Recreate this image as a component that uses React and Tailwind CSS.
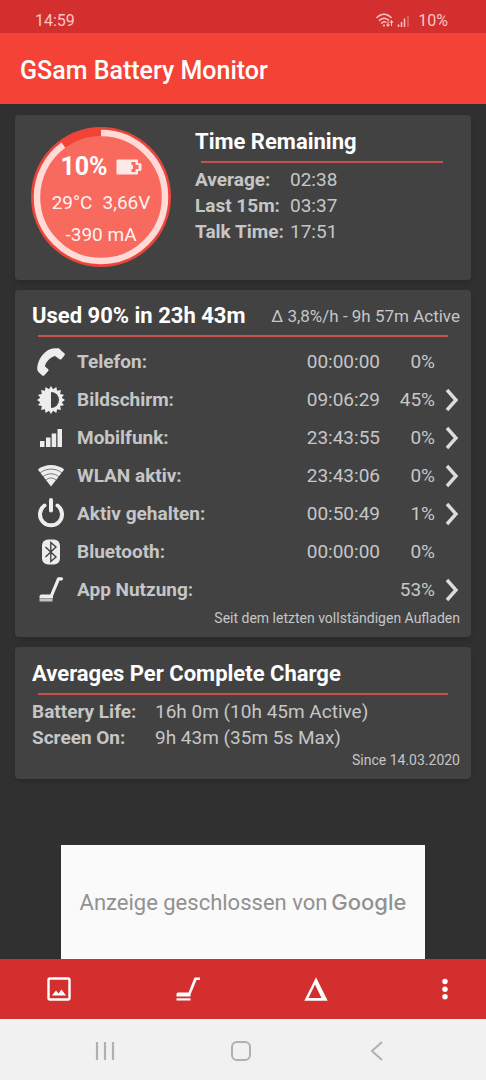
import React from 'react'

const PhoneIcon = () => (
  <svg viewBox="0 0 28 28" className="w-7 h-7 fill-[#ededed]">
    <path d="M13 1.200C16 0 19.500 0 21.500 .3C22.500 .5 23 1.200 23.800 2.200L27.300 5.300C28 6 28 6.600 27.400 7.400L24.800 10.800C24.200 11.600 23.400 11.700 22.600 11.200L18 8C13.500 9 8.500 14 8 18.500L11 21C11.700 21.600 11.800 22.200 11.200 23L7.400 27.200C6.700 28 6 28 5.200 27.400L1.500 23.900C.3 22.700 0 21 .3 19C1.300 11.500 6 4 13 1.200Z" />
  </svg>
)

const sunPoints = Array.from({ length: 32 }, (_, i) => {
  const radius = i % 2 === 0 ? 14 : 11
  const angle = (i * Math.PI) / 16 - Math.PI / 2
  return `${14 + radius * Math.cos(angle)},${14 + radius * Math.sin(angle)}`
}).join(' ')

const BrightnessIcon = () => (
  <svg viewBox="0 0 28 28" className="w-7 h-7">
    <polygon points={sunPoints} fill="#ededed" />
    <path d="M14 6A8 8 0 0 1 14 22Z" fill="#424242" />
  </svg>
)

const SignalIcon = () => (
  <svg viewBox="0 0 28 28" className="w-7 h-7 fill-[#ededed]">
    <rect x="3" y="17" width="4.500" height="6" />
    <rect x="9" y="13.500" width="4.500" height="9.500" />
    <rect x="14.700" y="9.500" width="4.500" height="13.500" />
    <rect x="20.500" y="5" width="4.500" height="18" />
  </svg>
)

const WifiIcon = () => (
  <svg viewBox="0 0 28 28" className="w-7 h-7">
    <path d="M14 24.500L.8 7.500C8 1.500 20 1.500 27.200 7.500Z" fill="#ededed" />
    <g fill="none" stroke="#6a6a6a" strokeWidth=".9">
      <path d="M3 11C9 5.800 19 5.800 25 11" />
      <path d="M6 14.800C10.500 10.800 17.500 10.800 22 14.800" />
      <path d="M8.500 18.300C12 15.200 16 15.200 19.500 18.300" />
    </g>
  </svg>
)

const PowerIcon = () => (
  <svg viewBox="0 0 28 28" className="w-7 h-7 overflow-visible" fill="none" stroke="#ededed" strokeWidth="4" strokeLinecap="round">
    <path d="M7.500 5.500A11 11 0 1 0 20.500 5.500" />
    <path d="M14 0V10.500" />
  </svg>
)

const BluetoothIcon = () => (
  <svg viewBox="0 0 28 28" className="w-7 h-7">
    <rect x="5" y="1.500" width="18" height="25" rx="6" fill="#ededed" />
    <path d="M8.500 9L19 19L13.800 23.500V4.500L19 9L8.500 19" fill="none" stroke="#424242" strokeWidth="1.400" />
  </svg>
)

const VacuumIcon = () => (
  <svg viewBox="0 0 28 28" className="w-7 h-7" fill="none">
    <path d="M24.500 2.800H21.500L14.500 19.500" stroke="#ededed" strokeWidth="3.200" strokeLinecap="round" strokeLinejoin="round" />
    <path d="M4.500 18.500H16V22.500H2.500V20.500Q2.500 18.500 4.500 18.500Z" fill="#ededed" />
    <path d="M2.500 23H15.500V25.500H2.500Z" fill="#c2c2c2" />
  </svg>
)

const ChevronIcon = () => (
  <svg viewBox="0 0 14 24" className="w-3.5 h-6" fill="none" stroke="#dcdcdc" strokeWidth="3.400">
    <path d="M2 2L11 12L2 22" />
  </svg>
)

const usage = [
  { label: 'Telefon:', time: '00:00:00', percent: '0%', Icon: PhoneIcon },
  { label: 'Bildschirm:', time: '09:06:29', percent: '45%', Icon: BrightnessIcon, more: true },
  { label: 'Mobilfunk:', time: '23:43:55', percent: '0%', Icon: SignalIcon, more: true },
  { label: 'WLAN aktiv:', time: '23:43:06', percent: '0%', Icon: WifiIcon, more: true },
  { label: 'Aktiv gehalten:', time: '00:50:49', percent: '1%', Icon: PowerIcon, more: true },
  { label: 'Bluetooth:', time: '00:00:00', percent: '0%', Icon: BluetoothIcon },
  { label: 'App Nutzung:', time: '', percent: '53%', Icon: VacuumIcon, more: true },
]

const Card = ({ children, className }) => (
  <section className={`rounded-sm bg-[#424242] shadow-md ${className}`}>{children}</section>
)

const StatusBar = () => (
  <div className="flex h-[33px] items-center justify-between bg-[#d32f2f] pt-2 pr-[38px] pl-[35px] text-base text-[#f9c6c3]">
    <span>14:59</span>
    <div className="flex items-center">
      <svg viewBox="0 0 34 16" className="mr-2 h-4 w-[34px]" fill="none" stroke="#f9c6c3" strokeWidth="1.500">
        <path d="M.5 5C5 0 11 0 15.500 5" />
        <path d="M3 7.800C6 4.300 10 4.300 13 7.500" />
        <path d="M5.200 10.500C7 8.300 9 8.300 10.300 9.500" />
        <circle cx="8" cy="12.500" r="1.100" fill="#f9c6c3" stroke="none" />
        <path d="M12 8.500V13M10.500 11.500L12 13.200L13.500 11.500M15.500 13V8M14 9.500L15.500 7.800L17 9.500" strokeWidth="1.100" />
        <path d="M22.500 11.500V14M25.500 9V14M28.500 5.500V14" />
        <path d="M32 3V14" strokeOpacity=".4" />
      </svg>
      <span>10%</span>
    </div>
  </div>
)

const BatteryGauge = () => (
  <div className="relative h-[140px] w-[140px] shrink-0">
    <svg viewBox="0 0 140 140" className="absolute inset-0 h-full w-full">
      <circle cx="70" cy="70" r="70" fill="#e2483d" />
      <circle cx="70" cy="70" r="68.500" fill="#f44336" />
      <circle cx="70" cy="70" r="61" fill="#f8695e" />
      {/* charge that is used up, clockwise from the top */}
      <circle cx="70" cy="70" r="64" fill="none" stroke="#ffdad7" strokeWidth="6.500" pathLength="100" strokeDasharray="90 10" transform="rotate(-90 70 70)" />
    </svg>
    <div className="relative flex flex-col items-center pt-6 text-[19px] text-[#fff3f2]">
      <div className="flex h-8 items-center gap-2 text-[25px] font-bold text-white">
        <span>10%</span>
        <svg viewBox="0 0 26 16" className="h-4 w-[26px]">
          <path d="M1.500 .5H21Q22 .5 22 1.500V4H24Q25.500 4 25.500 5.500V10.500Q25.500 12 24 12H22V14.500Q22 15.500 21 15.500H1.500Q.5 15.500 .5 14.500V1.500Q.5 .5 1.500 .5Z" fill="#ffe9e7" />
          <path d="M15.500 3H19.500V6H22.500V10H19.500V13H15.500V10H17V6H15.500Z" fill="#f8695e" />
        </svg>
      </div>
      <div className="mt-1 flex h-8 items-center gap-2.5">
        <span>29°C</span>
        <span>3,66V</span>
      </div>
      <div className="flex h-8 items-center">-390 mA</div>
    </div>
  </div>
)

export default function App() {
  return (
    <div className="flex min-h-screen flex-col bg-[#303030] font-[Roboto,sans-serif] text-[#c6c6c6]">
      <StatusBar />
      <header className="flex h-[71px] items-center bg-[#f44336] px-5 pt-1">
        <h1 className="text-[25px] font-medium text-white">GSam Battery Monitor</h1>
      </header>

      <main className="flex flex-1 flex-col gap-2.5 px-[15px] pt-[11px]">
        <Card className="flex gap-6 px-4 pt-3 pb-[13px]">
          <BatteryGauge />
          <div className="flex-1 pt-px">
            <h2 className="text-[22px] leading-7 font-bold text-white">Time Remaining</h2>
            <hr className="mt-[5px] mr-3 mb-1 ml-1.5 border-t-2 border-[#c4524d]" />
            <dl className="grid grid-cols-[95px_1fr] text-[19px] leading-[26px]">
              <dt className="font-bold">Average:</dt>
              <dd>02:38</dd>
              <dt className="font-bold">Last 15m:</dt>
              <dd>03:37</dd>
              <dt className="font-bold">Talk Time:</dt>
              <dd>17:51</dd>
            </dl>
          </div>
        </Card>

        <Card className="pt-3 pr-[11px] pb-2.5 pl-[17px]">
          <div className="flex items-center justify-between">
            <h2 className="text-[22px] leading-7 font-bold text-white">Used 90% in 23h 43m</h2>
            <span className="pt-0.5 text-[17px]">Δ 3,8%/h - 9h 57m Active</span>
          </div>
          <hr className="mt-[5px] mr-3 mb-1.5 ml-1.5 border-t-2 border-[#c4524d]" />
          <table className="w-full text-[19px]">
            <tbody>
              {usage.map(({ label, time, percent, Icon, more }) => (
                <tr key={label} className="h-[38px]">
                  <td className="w-[45px] pl-[5px]">
                    <Icon />
                  </td>
                  <th scope="row" className="text-left font-bold">{label}</th>
                  <td className="text-right">{time}</td>
                  <td className="w-[55px] text-right">{percent}</td>
                  <td className="w-[25px] pl-2.5">
                    {more && (
                      <button type="button" aria-label={label} className="block">
                        <ChevronIcon />
                      </button>
                    )}
                  </td>
                </tr>
              ))}
            </tbody>
          </table>
          <p className="text-right text-sm leading-[18px]">Seit dem letzten vollständigen Aufladen</p>
        </Card>

        <Card className="pt-[13px] pr-[11px] pb-2.5 pl-[17px]">
          <h2 className="text-[22px] leading-7 font-bold text-white">Averages Per Complete Charge</h2>
          <hr className="mt-[5px] mr-3 mb-1 ml-1.5 border-t-2 border-[#c4524d]" />
          <dl className="grid grid-cols-[123px_1fr] text-[19px] leading-[26px]">
            <dt className="font-bold">Battery Life:</dt>
            <dd>16h 0m (10h 45m Active)</dd>
            <dt className="font-bold">Screen On:</dt>
            <dd>9h 43m (35m 5s Max)</dd>
          </dl>
          <p className="text-right text-sm leading-[18px]">Since 14.03.2020</p>
        </Card>

        <aside className="mx-[46px] mt-auto flex h-[114px] items-center justify-center gap-1 bg-[#fafafa] text-[22px] whitespace-nowrap text-[#919191]">
          <span>Anzeige geschlossen von</span>
          <span className="font-[Inter,sans-serif] font-medium">Google</span>
        </aside>
      </main>

      <nav className="flex h-[60px] items-center justify-between bg-[#d32f2f] pr-[29px] pl-[47px]">
        <button type="button" aria-label="Chart">
          <svg viewBox="0 0 24 24" className="h-6 w-6" fill="none">
            <rect x="1.500" y="1.500" width="21" height="21" rx="1.500" stroke="#fff" strokeWidth="2.400" />
            <path d="M5 18.500L9 13.500L11.500 16.500L14.500 12.500L19 18.500Z" fill="#fff" />
          </svg>
        </button>
        <button type="button" aria-label="App usage">
          <svg viewBox="0 0 24 24" className="h-6 w-6 fill-white">
            <path d="M18.500 .5H24V3H20.500L14.500 17.500V19.500H.5V17Q.5 15.500 2 15.500H12.500Z" />
            <path d="M.5 21.300H14.500V23.500H.5Z" />
          </svg>
        </button>
        <button type="button" aria-label="Delta">
          <svg viewBox="0 0 24 24" className="h-6 w-6 fill-white">
            <path fillRule="evenodd" d="M12 .3L23.700 23.700H.3ZM11 7.500L4.500 21H17.500Z" />
          </svg>
        </button>
        <button type="button" aria-label="More options">
          <svg viewBox="0 0 24 24" className="h-6 w-6 fill-white">
            <circle cx="12" cy="4.500" r="2.700" />
            <circle cx="12" cy="12.200" r="2.700" />
            <circle cx="12" cy="19.800" r="2.700" />
          </svg>
        </button>
      </nav>

      <footer className="flex h-[61px] items-center justify-center gap-[116px] bg-[#f1f1f1] pt-0.5 pr-1">
        <button type="button" aria-label="Recent apps">
          <svg viewBox="0 0 20 20" className="h-5 w-5" stroke="#b0b0b0" strokeWidth="2.200">
            <path d="M2 1V19M10 1V19M18 1V19" />
          </svg>
        </button>
        <button type="button" aria-label="Home">
          <svg viewBox="0 0 20 20" className="h-5 w-5" fill="none" stroke="#b0b0b0" strokeWidth="2">
            <rect x="1" y="1" width="18" height="18" rx="5" />
          </svg>
        </button>
        <button type="button" aria-label="Back">
          <svg viewBox="0 0 20 20" className="h-5 w-5" fill="none" stroke="#b0b0b0" strokeWidth="2">
            <path d="M15 1L5 10L15 19" />
          </svg>
        </button>
      </footer>
    </div>
  )
}
